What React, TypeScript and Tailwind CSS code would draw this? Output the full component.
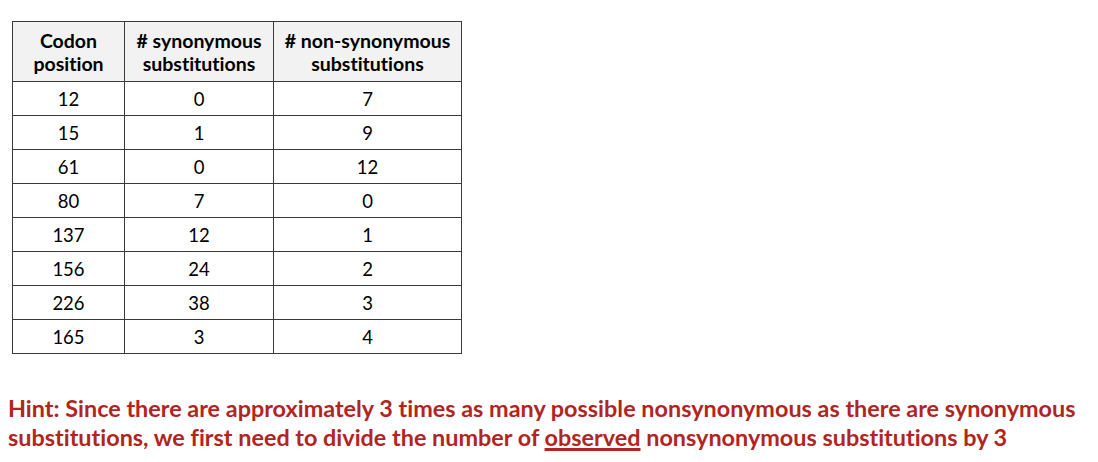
import React from 'react';

const rows: [string, string, string][] = [
  ['12', '0', '7'],
  ['15', '1', '9'],
  ['61', '0', '12'],
  ['80', '7', '0'],
  ['137', '12', '1'],
  ['156', '24', '2'],
  ['226', '38', '3'],
  ['165', '3', '4'],
];

const App: React.FC = () => {
  return (
    <div className="w-[1098px] h-[462px] bg-white font-['Lato','Liberation_Sans',sans-serif] text-black [font-variant-ligatures:none]">
      <div className="pt-[21px] pl-[12px]">
        <table className="border-collapse border border-[#3a3a3a] text-center">
          <thead>
            <tr className="h-[60px] bg-[#f2f2f2] text-[19.5px] font-bold leading-[23px]">
              <th className="w-[112px] border border-[#3a3a3a] font-bold">Codon<br />position</th>
              <th className="w-[149px] border border-[#3a3a3a] font-bold"># synonymous<br />substitutions</th>
              <th className="w-[188px] border border-[#3a3a3a] font-bold"># non-synonymous<br />substitutions</th>
            </tr>
          </thead>
          <tbody className="text-[18.5px] leading-[22px]">
            {rows.map((r, i) => (
              <tr key={i} className="h-[34px]">
                {r.map((c, j) => (
                  <td key={j} className="border border-[#3a3a3a] p-0">{c}</td>
                ))}
              </tr>
            ))}
          </tbody>
        </table>
      </div>
      <p className="mt-[40px] ml-[8px] text-[23.4px] font-bold leading-[29px] text-[#b1251f] whitespace-nowrap">
        Hint: Since there are approximately 3 times as many possible nonsynonymous as there are synonymous<br />
        substitutions, we first need to divide the number of{' '}
        <span className="underline decoration-[3px] underline-offset-[2px]">observed</span> nonsynonymous substitutions by 3
      </p>
    </div>
  );
};

export default App;
